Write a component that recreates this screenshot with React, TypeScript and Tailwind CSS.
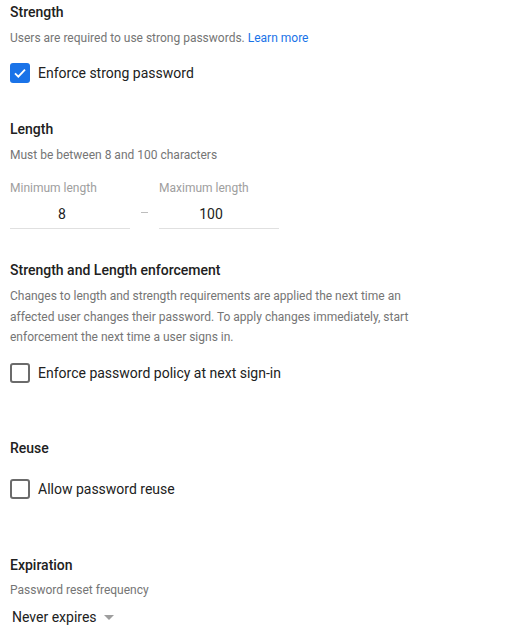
import React, { useState } from 'react'

const Check = ({ checked, onClick }: { checked: boolean; onClick: () => void }) => {
  if (checked) {
    return (
      <div onClick={onClick} className="w-[20px] h-[20px] rounded-[3px] bg-[#1a73e8] flex items-center justify-center cursor-pointer shrink-0">
        <svg width="16" height="16" viewBox="0 0 24 24">
          <path d="M4.5 12.5l5 5L19.5 7" fill="none" stroke="#fff" strokeWidth="2.8" />
        </svg>
      </div>
    )
  }
  return (
    <div onClick={onClick} className="w-[20px] h-[20px] rounded-[3px] border-2 border-[#6b6b6b] cursor-pointer shrink-0" />
  )
}

const CheckRow = ({ label, checked, onClick, className }: { label: string; checked: boolean; onClick: () => void; className: string }) => (
  <div className={`flex flex-row items-center h-[20px] ${className}`}>
    <Check checked={checked} onClick={onClick} />
    <span className="ml-[8px] text-[14px] leading-[20px] text-[#212121]">{label}</span>
  </div>
)

const Heading = ({ children, className }: { children: React.ReactNode; className: string }) => (
  <h3 className={`text-[14px] leading-[20px] font-medium text-[#212121] ${className}`}>{children}</h3>
)

const App = () => {
  let [strong, setStrong] = useState(true)
  let [atSignIn, setAtSignIn] = useState(false)
  let [reuse, setReuse] = useState(false)

  return (
    <div className="w-[530px] h-[638px] bg-white px-[10px] flex flex-col font-['Roboto',sans-serif] overflow-hidden">
      <Heading className="mt-[2px]">Strength</Heading>
      <p className="mt-[8px] text-[12px] leading-[16px] text-[#757575]">
        Users are required to use strong passwords. <span className="text-[#1a73e8] cursor-pointer">Learn more</span>
      </p>
      <CheckRow className="mt-[17px]" label="Enforce strong password" checked={strong} onClick={() => setStrong(!strong)} />

      <Heading className="mt-[36px]">Length</Heading>
      <p className="mt-[8px] text-[12px] leading-[16px] text-[#757575]">Must be between 8 and 100 characters</p>
      <div className="mt-[17px] flex flex-row">
        <div className="w-[120px] flex flex-col">
          <span className="text-[12px] leading-[16px] text-[#9e9e9e]">Minimum length</span>
          <div className="mt-[4px] pt-[4px] pb-[4px] pr-[16px] border-b border-[#e0e0e0] text-center text-[14px] leading-[20px] text-[#212121]">8</div>
        </div>
        <div className="w-[29px] flex items-end justify-center pb-[16px]">
          <div className="w-[7px] h-px bg-[#bdbdbd]" />
        </div>
        <div className="w-[120px] flex flex-col">
          <span className="text-[12px] leading-[16px] text-[#9e9e9e]">Maximum length</span>
          <div className="mt-[4px] pt-[4px] pb-[4px] pr-[16px] border-b border-[#e0e0e0] text-center text-[14px] leading-[20px] text-[#212121]">100</div>
        </div>
      </div>

      <Heading className="mt-[31px]">Strength and Length enforcement</Heading>
      <p className="mt-[6px] max-w-[412px] text-[12px] leading-[20.5px] text-[#757575]">
        Changes to length and strength requirements are applied the next time an affected user changes their password. To apply changes immediately, start enforcement the next time a user signs in.
      </p>
      <CheckRow className="mt-[15px]" label="Enforce password policy at next sign-in" checked={atSignIn} onClick={() => setAtSignIn(!atSignIn)} />

      <Heading className="mt-[55px]">Reuse</Heading>
      <CheckRow className="mt-[21px]" label="Allow password reuse" checked={reuse} onClick={() => setReuse(!reuse)} />

      <Heading className="mt-[56px]">Expiration</Heading>
      <p className="mt-[7px] text-[12px] leading-[16px] text-[#757575]">Password reset frequency</p>
      <div className="mt-[9px] ml-[2px] flex flex-row items-center cursor-pointer">
        <span className="text-[14px] leading-[20px] text-[#212121]">Never expires</span>
        <div className="ml-[7px] mt-[1px] w-0 h-0 border-l-[5px] border-r-[5px] border-t-[5px] border-l-transparent border-r-transparent border-t-[#9e9e9e]" />
      </div>
    </div>
  )
}

export default App
